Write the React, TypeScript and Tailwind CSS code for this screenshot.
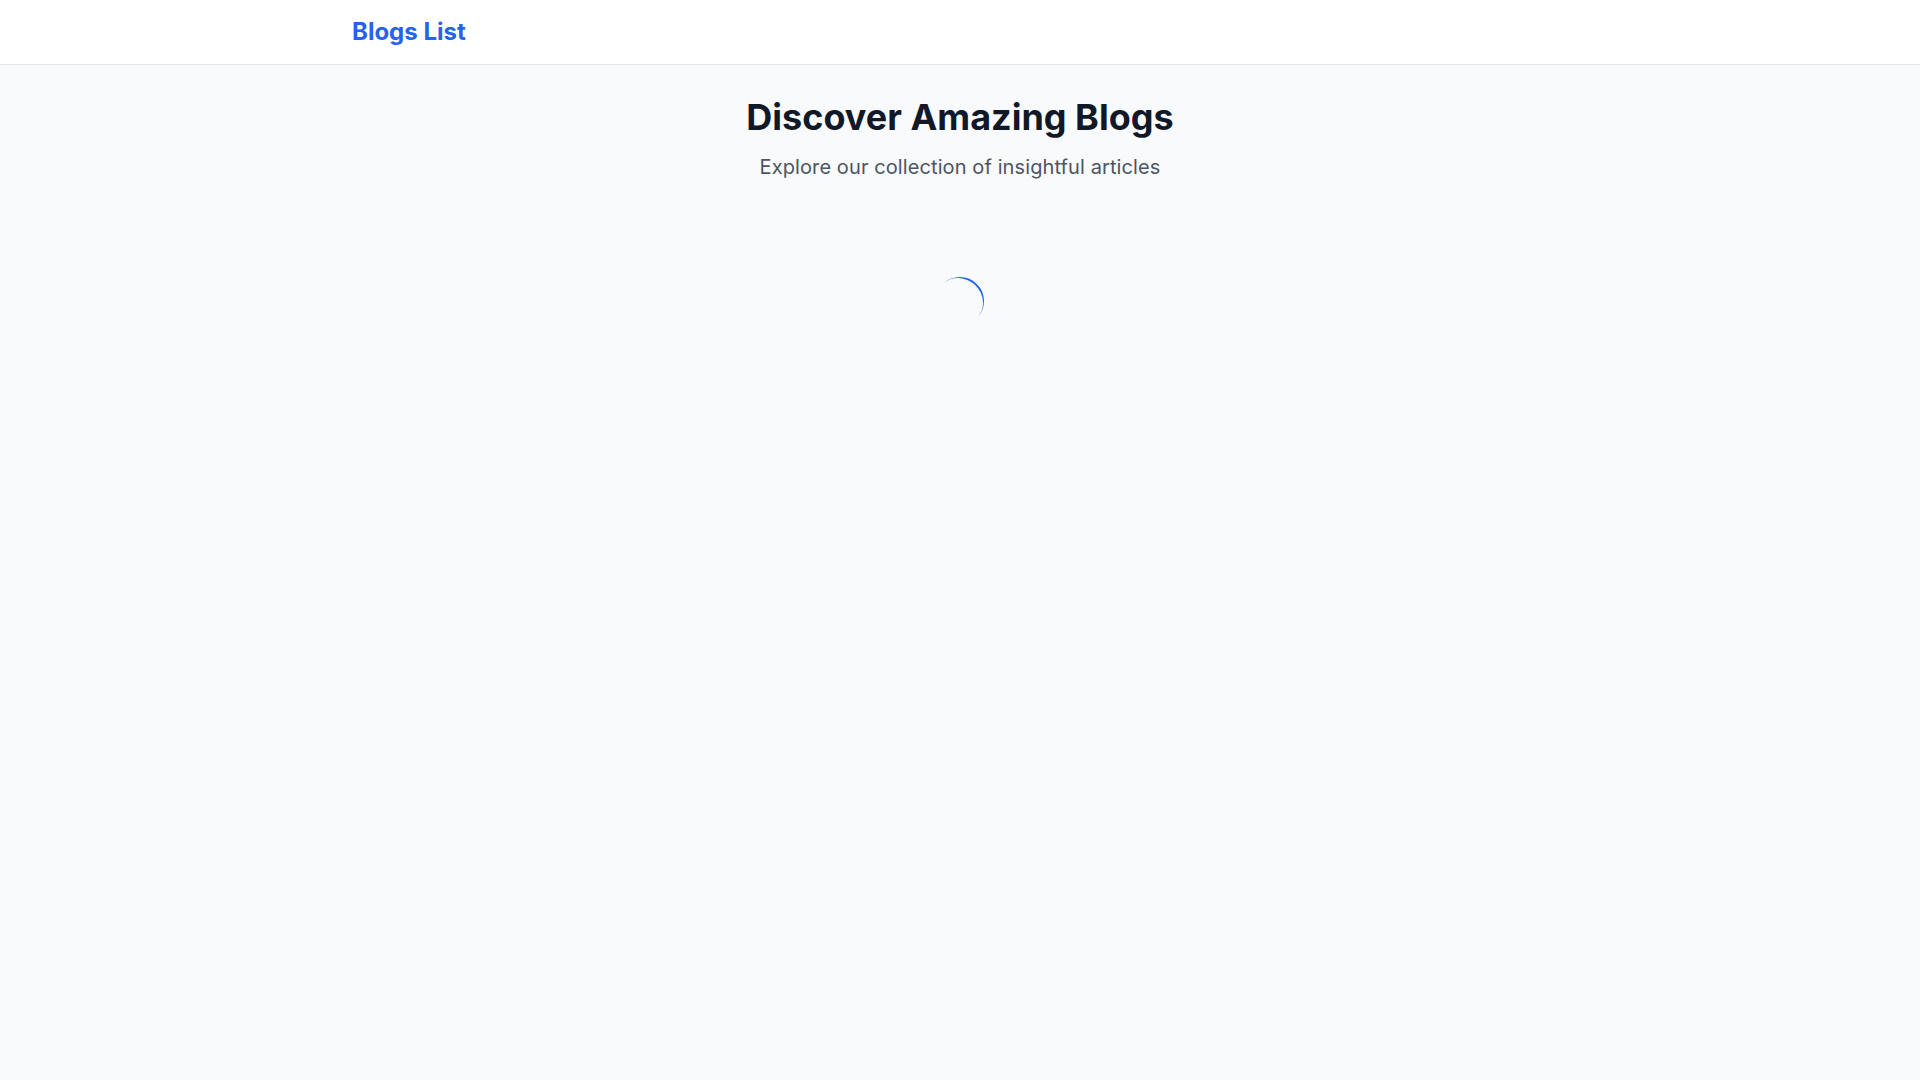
export default function App() {
  return (
    <div className="min-h-screen bg-[#f9fafb]" style={{ fontFamily: 'Inter, "Noto Sans", sans-serif' }}>
      {/* Nav */}
      <nav className="bg-white border-b border-[#e5e7eb]">
        <div className="max-w-7xl mx-auto px-8 h-16 flex items-center">
          <span className="text-2xl font-bold text-[#2563eb]">Blogs List</span>
        </div>
      </nav>

      <main className="max-w-7xl mx-auto px-8 py-8">
        <div className="text-center mb-12">
          <h1 className="text-4xl font-bold text-[#111827] mb-4">Discover Amazing Blogs</h1>
          <p className="text-xl text-[#4b5563] tracking-[0.1px]">Explore our collection of insightful articles</p>
        </div>

        {/* Loading */}
        <div className="flex justify-center items-center py-12">
          <div className="h-12 w-12 rounded-full border-b-2 border-[#2563eb] rotate-[225deg]" />
        </div>
      </main>
    </div>
  );
}
